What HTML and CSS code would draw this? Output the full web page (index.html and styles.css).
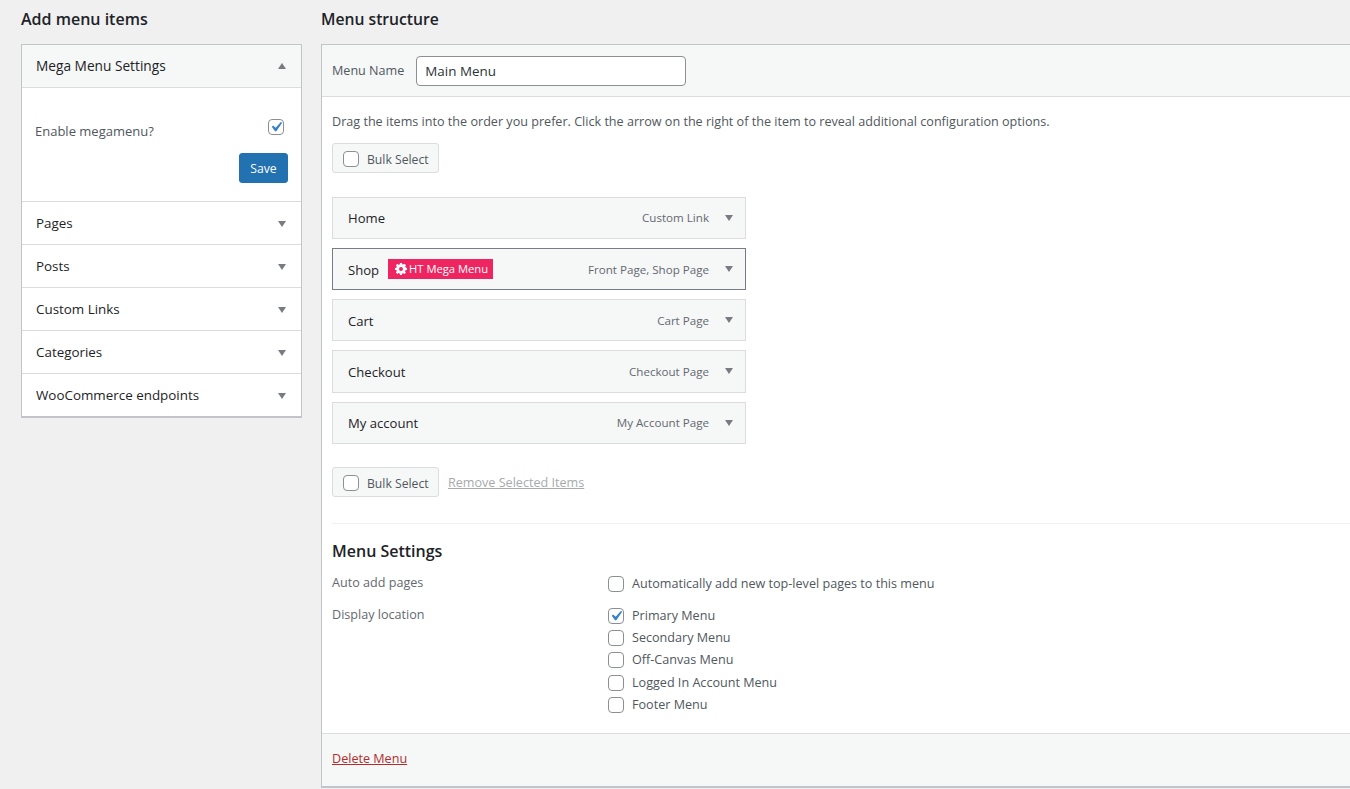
FILE: index.html
```html
<!DOCTYPE html>
<html lang="en">
<head>
    <meta charset="UTF-8">
    <title>Menus</title>
    <link rel="stylesheet" href="styles.css">
</head>
<body>
    <div class="page">
        <!-- Left column -->
        <aside class="side">
            <h2 class="col-title">Add menu items</h2>
            <div class="accordion">
                <div class="acc-head open">
                    <span>Mega Menu Settings</span>
                    <i class="caret up"></i>
                </div>
                <div class="acc-body">
                    <div class="acc-row">
                        <span>Enable megamenu?</span>
                        <input type="checkbox" class="check" checked>
                    </div>
                    <button type="button" class="save-btn">Save</button>
                </div>
                <div class="acc-head"><span>Pages</span><i class="caret"></i></div>
                <div class="acc-head"><span>Posts</span><i class="caret"></i></div>
                <div class="acc-head"><span>Custom Links</span><i class="caret"></i></div>
                <div class="acc-head"><span>Categories</span><i class="caret"></i></div>
                <div class="acc-head"><span>WooCommerce endpoints</span><i class="caret"></i></div>
            </div>
        </aside>

        <!-- Right column -->
        <main class="main">
            <h2 class="col-title">Menu structure</h2>
            <div class="panel">
                <div class="panel-head">
                    <label for="menuName">Menu Name</label>
                    <input type="text" id="menuName" class="name-input" value="Main Menu">
                </div>

                <div class="panel-body">
                    <p class="hint">Drag the items into the order you prefer. Click the arrow on the right of the item to reveal additional configuration options.</p>
                    <label class="bulk"><input type="checkbox" class="check"> <span>Bulk Select</span></label>

                    <ul class="items">
                        <li class="item"><b>Home</b><span class="item-type">Custom Link</span><i class="caret"></i></li>
                        <li class="item active">
                            <b>Shop</b>
                            <span class="badge">
                                <svg width="12" height="12" viewBox="0 0 12 12"><path fill="#fff" fill-rule="evenodd" d="M5 0h2l.3 1.6 1-.4L9.700.9l1.400 1.400-.9 1.300.5 1 1.300.4v2l-1.600.3-.4 1 .9 1.400-1.400 1.400-1.400-.9-1 .4L7 12H5l-.3-1.600-1-.4-1.400.9L.9 9.500l.9-1.400-.4-1L0 7V5l1.400-.3.4-1L.9 2.300 2.300.9l1.400.9 1-.4zM6 4a2 2 0 1 0 0 4 2 2 0 0 0 0-4z"/></svg>
                                HT Mega Menu
                            </span>
                            <span class="item-type">Front Page, Shop Page</span><i class="caret"></i>
                        </li>
                        <li class="item"><b>Cart</b><span class="item-type">Cart Page</span><i class="caret"></i></li>
                        <li class="item"><b>Checkout</b><span class="item-type">Checkout Page</span><i class="caret"></i></li>
                        <li class="item"><b>My account</b><span class="item-type">My Account Page</span><i class="caret"></i></li>
                    </ul>

                    <div class="bulk-row">
                        <label class="bulk"><input type="checkbox" class="check"> <span>Bulk Select</span></label>
                        <a href="#" class="remove-link">Remove Selected Items</a>
                    </div>

                    <div class="settings">
                        <h3>Menu Settings</h3>
                        <div class="setting-row">
                            <span class="setting-label">Auto add pages</span>
                            <div class="setting-opts">
                                <label><input type="checkbox" class="check"> Automatically add new top-level pages to this menu</label>
                            </div>
                        </div>
                        <div class="setting-row">
                            <span class="setting-label">Display location</span>
                            <div class="setting-opts">
                                <label><input type="checkbox" class="check" checked> Primary Menu</label>
                                <label><input type="checkbox" class="check"> Secondary Menu</label>
                                <label><input type="checkbox" class="check"> Off-Canvas Menu</label>
                                <label><input type="checkbox" class="check"> Logged In Account Menu</label>
                                <label><input type="checkbox" class="check"> Footer Menu</label>
                            </div>
                        </div>
                    </div>
                </div>

                <div class="panel-foot">
                    <a href="#" class="delete-link">Delete Menu</a>
                </div>
            </div>
        </main>
    </div>
</body>
</html>
```

FILE: styles.css
```css
html, body {
    height: 100%;
    overflow: hidden;
}

body {
    margin: 0;
    background-color: #f0f0f1;
    color: #50575e;
    font-family: "Open Sans", "Noto Sans", sans-serif;
    font-size: 12.6px;
    line-height: 18px;
}

.page {
    display: flex;
    gap: 19px;
    padding-left: 21px;
    width: 1400px;
}

.side {
    flex: 0 0 281px;
}

.main {
    flex: 1;
}

.col-title {
    margin: 0;
    height: 44px;
    padding-top: 9px;
    box-sizing: border-box;
    font-size: 15.7px;
    line-height: 20px;
    font-weight: 600;
    color: #1d2327;
}

.side .col-title {
    font-size: 16px;
}

/* Accordion */
.accordion {
    background-color: #fff;
    border: 1px solid #c3c4c7;
    border-bottom-width: 2px;
}

.acc-head {
    display: flex;
    align-items: center;
    justify-content: space-between;
    height: 43px;
    box-sizing: border-box;
    padding: 0 15px 0 14px;
    border-top: 1px solid #dcdcde;
    font-size: 13.4px;
    font-weight: 500;
    color: #1d2327;
}

.acc-head.open {
    background-color: #f6f7f7;
    border-top: none;
    border-bottom: 1px solid #dcdcde;
    font-size: 13.7px;
}

.caret {
    width: 0;
    height: 0;
    margin-top: 1px;
    border-left: 4px solid transparent;
    border-right: 4px solid transparent;
    border-top: 6px solid #787c82;
}

.caret.up {
    margin-top: 0;
    border-top: none;
    border-bottom: 6px solid #787c82;
}

.acc-body {
    display: flex;
    flex-direction: column;
    height: 113px;
    box-sizing: border-box;
    padding: 31px 13px 0 13px;
}

.acc-row {
    display: flex;
    justify-content: space-between;
    padding-right: 4px;
    height: 34px;
    font-size: 13px;
}

.acc-row span {
    padding-top: 3px;
}

.save-btn {
    align-self: flex-end;
    width: 49px;
    height: 30px;
    padding: 2px 0 0;
    background-color: #2271b1;
    color: #fff;
    border: 1px solid #2271b1;
    border-radius: 3px;
    font: inherit;
    font-size: 12.2px;
}

/* Checkbox */
.check {
    appearance: none;
    flex: none;
    width: 16px;
    height: 16px;
    margin: 0;
    background-color: #fff;
    border: 1px solid #8c8f94;
    border-radius: 4px;
}

.check:checked {
    background: #fff url("data:image/svg+xml;utf8,<svg xmlns='http://www.w3.org/2000/svg' viewBox='0 0 20 20'><path d='M14.830 4.890l1.340.94-5.810 8.380H9.020L5.780 9.670l1.340-1.250 2.570 2.400z' fill='%233582c4'/></svg>") center / 20px no-repeat;
}

/* Menu panel */
.panel {
    background-color: #fff;
    border: 1px solid #c3c4c7;
    border-bottom-width: 2px;
}

.panel-head {
    display: flex;
    align-items: center;
    gap: 12px;
    height: 52px;
    box-sizing: border-box;
    padding: 1px 10px 0;
    background-color: #f6f7f7;
    border-bottom: 1px solid #dcdcde;
}

.name-input {
    width: 270px;
    height: 30px;
    box-sizing: border-box;
    padding: 0 8px;
    border: 1px solid #8c8f94;
    border-radius: 4px;
    font: inherit;
    font-size: 13.4px;
    color: #2c3338;
}

.panel-body {
    padding: 0 10px;
}

.hint {
    margin: 16px 0 12px;
}

.bulk {
    display: inline-flex;
    align-items: center;
    gap: 8px;
    width: 107px;
    height: 30px;
    box-sizing: border-box;
    padding: 2px 10px 0;
    background-color: #f6f7f7;
    border: 1px solid #dcdcde;
    border-radius: 3px;
    font-size: 12.2px;
    white-space: nowrap;
}

.bulk span {
    padding-top: 1px;
}

.items {
    list-style: none;
    margin: 23.5px 0 0;
    padding: 0;
    width: 414px;
}

.item {
    display: flex;
    align-items: center;
    height: 42.25px;
    box-sizing: border-box;
    margin-bottom: 9px;
    padding: 0 12px 0 15px;
    background-color: #f6f7f7;
    border: 1px solid #dcdcde;
}

.item.active {
    border-color: #787c82;
}

.item .caret {
    margin-top: 0;
}

.item b {
    padding-top: 1.5px;
    font-size: 13.1px;
    font-weight: 500;
    color: #1d2327;
}

.item-type {
    margin-left: auto;
    margin-right: 16px;
    padding-top: 1.5px;
    font-size: 11.6px;
    color: #646970;
}

.badge {
    display: inline-flex;
    align-items: center;
    gap: 2px;
    height: 20px;
    margin-left: 9px;
    padding: 0 5px 0 7px;
    background-color: #ee2560;
    color: #fff;
    font-size: 11.2px;
}

.bulk-row {
    display: flex;
    align-items: center;
    gap: 9px;
    margin-top: 23.25px;
}

.remove-link {
    margin-top: 2px;
    color: #a7aaad;
}

/* Menu settings */
.settings {
    margin-top: 25.75px;
    margin-right: -10px;
    height: 210px;
    box-sizing: border-box;
    border-top: 1px solid #f0f0f1;
}

.settings h3 {
    margin: 0 0 13px;
    padding-top: 17px;
    font-size: 16px;
    line-height: 20px;
    font-weight: 600;
    color: #1d2327;
}

.setting-row {
    display: flex;
    margin-bottom: 13px;
}

.setting-label {
    flex: 0 0 276px;
    color: #646970;
}

.setting-opts {
    display: flex;
    flex-direction: column;
    gap: 4.25px;
    padding-top: 1px;
}

.setting-opts label {
    display: flex;
    align-items: center;
    gap: 8px;
    height: 18px;
}

.panel-foot {
    height: 53px;
    box-sizing: border-box;
    padding: 16px 10px 0;
    background-color: #f6f7f7;
    border-top: 1px solid #dcdcde;
}

.delete-link {
    color: #b32d2e;
}
```
